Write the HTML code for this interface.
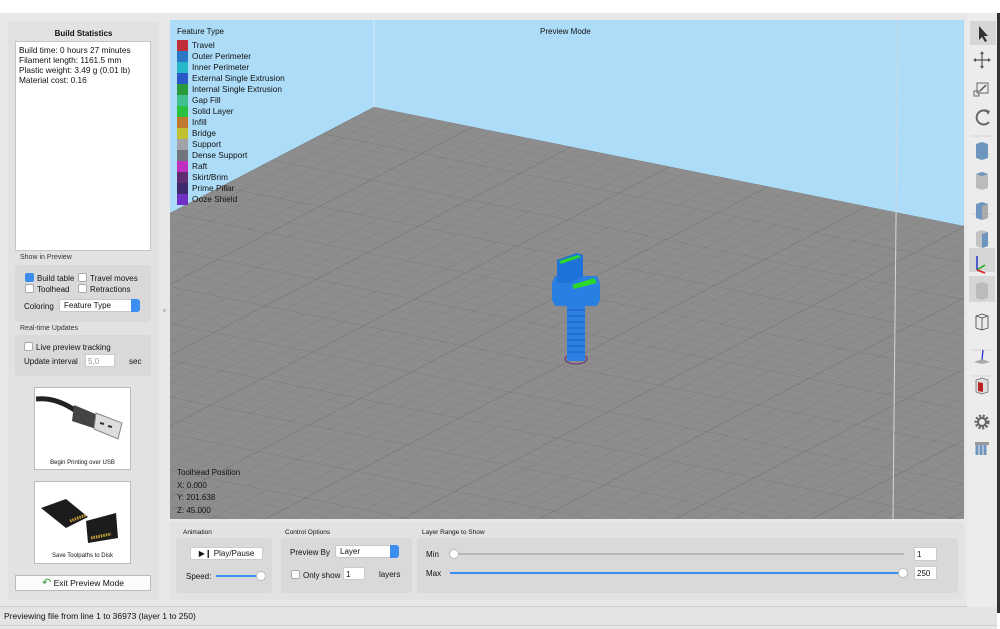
<!DOCTYPE html>
<html><head><meta charset="utf-8"><style>
*{box-sizing:border-box;margin:0;padding:0}
body{width:1000px;height:629px;background:#fff;font-family:"Liberation Sans",sans-serif;font-size:8px;color:#111;position:relative;overflow:hidden}
.abs{position:absolute}
.win{left:0;top:13px;width:997px;height:616px;background:#e8e8e8}
.panel{background:#e2e2e2;border-radius:3px}
.box{background:#d9d9d9;border-radius:3px}
.cb{display:inline-block;width:9px;height:9px;border:1px solid #aaa;background:#fff;border-radius:2px;vertical-align:-1px;margin-right:3px}
.cb.on{background:#3b8df0;border-color:#3b8df0}
.sel{background:#fff;border:1px solid #c8c8c8;border-radius:3px;height:13px;line-height:11px;padding-left:4px}
.sel i{position:absolute;right:-1px;top:-1px;width:9px;height:13px;background:#3b8df0;border-radius:0 3px 3px 0}
.leg div{height:11px;line-height:11px;white-space:nowrap;font-size:8.3px}
.leg span{display:inline-block;width:11px;height:11px;vertical-align:top;margin-right:4px}
.tb{left:970px;width:26px;height:24px}
</style></head><body>
<div class="abs win"></div>
<div class="abs panel" style="left:8px;top:21px;width:151px;height:579px"></div>
<div class="abs" style="left:8px;top:29px;width:151px;text-align:center;font-weight:bold;font-size:8px">Build Statistics</div>
<div class="abs" style="left:15px;top:41px;width:136px;height:210px;background:#fff;border:1px solid #c6c6c6;padding:3px 3px;line-height:10px;font-size:8.3px">Build time: 0 hours 27 minutes<br>Filament length: 1161.5 mm<br>Plastic weight: 3.49 g (0.01 lb)<br>Material cost: 0.16</div>
<div class="abs" style="left:20px;top:254px;font-size:7px;color:#333">Show in Preview</div>
<div class="abs box" style="left:15px;top:265px;width:136px;height:57px"></div>
<div class="abs" style="left:25px;top:273px"><span class="cb on"></span>Build table</div>
<div class="abs" style="left:78px;top:273px"><span class="cb"></span>Travel moves</div>
<div class="abs" style="left:25px;top:284px"><span class="cb"></span>Toolhead</div>
<div class="abs" style="left:78px;top:284px"><span class="cb"></span>Retractions</div>
<div class="abs" style="left:24px;top:302px">Coloring</div>
<div class="abs sel" style="left:59px;top:299px;width:81px">Feature Type<i></i></div>
<div class="abs" style="left:20px;top:325px;font-size:7px;color:#333">Real-time Updates</div>
<div class="abs box" style="left:15px;top:335px;width:136px;height:41px"></div>
<div class="abs" style="left:24px;top:342px"><span class="cb"></span>Live preview tracking</div>
<div class="abs" style="left:24px;top:357px">Update interval</div>
<div class="abs" style="left:85px;top:354px;width:30px;height:13px;background:#fff;border:1px solid #ccc;color:#999;padding:2px 2px">5,0</div>
<div class="abs" style="left:129px;top:357px">sec</div>
<div class="abs" style="left:34px;top:387px;width:97px;height:83px;background:#fff;border:1px solid #bbb"></div>
<svg class="abs" style="left:36px;top:389px" width="93" height="66"><path d="M0 10 Q20 8 40 22" stroke="#222" stroke-width="5" fill="none"/><path d="M38 16 L62 26 L60 40 L36 32Z" fill="#444"/><path d="M60 24 L86 34 L82 50 L58 40Z" fill="#ddd" stroke="#888"/><path d="M64 34l4 1M72 37l4 1" stroke="#333" stroke-width="2"/></svg>
<div class="abs" style="left:34px;top:460px;width:97px;text-align:center;font-size:6px">Begin Printing over USB</div>
<div class="abs" style="left:34px;top:481px;width:97px;height:83px;background:#fff;border:1px solid #bbb"></div>
<svg class="abs" style="left:36px;top:483px" width="93" height="66"><path d="M5 25 L30 16 L52 34 L30 45Z" fill="#1c1c1c"/><path d="M34 38l16-6" stroke="#c9a23a" stroke-width="3" stroke-dasharray="1.5 1"/><path d="M50 38 L80 30 L82 55 L52 60Z" fill="#1c1c1c"/><path d="M55 55l20-4" stroke="#c9a23a" stroke-width="3" stroke-dasharray="1.5 1"/></svg>
<div class="abs" style="left:34px;top:553px;width:97px;text-align:center;font-size:6px">Save Toolpaths to Disk</div>
<div class="abs" style="left:15px;top:575px;width:136px;height:16px;background:#fbfbfb;border:1px solid #bbb;text-align:center;line-height:14px;font-size:8.5px"><span style="color:#3a9a3a;font-size:11px">&#x21B6;</span> Exit Preview Mode</div>
<div class="abs" style="left:163px;top:309px;width:3px;height:3px;border-radius:50%;background:#bbb"></div>
<svg class="abs" style="left:170px;top:20px" width="794" height="499" viewBox="170 20 794 499">
<defs><pattern id="g" patternUnits="userSpaceOnUse" width="1" height="1" patternTransform="matrix(19.7,3.97,-10.2,5.3,374,107)"><rect width="1" height="1" fill="#8d8d8d"/><path d="M0 0H1M0 0V1" stroke="#7d7d7d" stroke-width="0.07"/></pattern>
<pattern id="G" patternUnits="userSpaceOnUse" width="5" height="5" patternTransform="matrix(19.7,3.97,-10.2,5.3,374,107)"><path d="M0 0H5M0 0V5" stroke="#6e6e6e" stroke-width="0.06"/></pattern></defs>
<rect x="170" y="20" width="794" height="499" fill="#acdcf8"/>
<line x1="374" y1="20" x2="374" y2="107" stroke="#d8eaf5" stroke-width="1"/>
<polygon points="374,107 964,226 964,519 170,519 170,213" fill="url(#g)"/>
<polygon points="374,107 964,226 964,519 170,519 170,213" fill="url(#G)"/>
<line x1="898" y1="20" x2="893" y2="519" stroke="#cfd8de" stroke-width="1"/>
<ellipse cx="576" cy="359" rx="11" ry="5" fill="none" stroke="#702070" stroke-width="1"/>
<rect x="567" y="305" width="18" height="56" fill="#2a7fe0"/>
<path d="M567 310h18M567 316h18M567 322h18M567 328h18M567 334h18M567 340h18M567 346h18M567 352h18" stroke="#1a5fbf" stroke-width="1"/>
<path d="M552 283 L555 276 L597 276 L600 283 L600 300 L597 306 L555 306 L552 300Z" fill="#2a80e2"/>
<path d="M557 260 L577 253 L583 255 L583 276 L570 283 L557 283Z" fill="#1e72d8"/>
<path d="M559 261 L578 255 L581 257 L561 264Z" fill="#2bd82b"/>
<path d="M572 285 L594 278 L597 283 L574 289Z" fill="#2bd82b"/>
</svg>
<div class="abs" style="left:540px;top:27px;font-size:8px">Preview Mode</div>
<div class="abs" style="left:177px;top:27px">Feature Type</div>
<div class="abs leg" style="left:177px;top:40px">
<div><span style="background:#c0303a"></span>Travel</div><div><span style="background:#2a78c8"></span>Outer Perimeter</div><div><span style="background:#26b8c8"></span>Inner Perimeter</div><div><span style="background:#2a58c8"></span>External Single Extrusion</div><div><span style="background:#2a9a3a"></span>Internal Single Extrusion</div><div><span style="background:#40c090"></span>Gap Fill</div><div><span style="background:#2ac040"></span>Solid Layer</div><div><span style="background:#c07a30"></span>Infill</div><div><span style="background:#c0c030"></span>Bridge</div><div><span style="background:#a0a4a8"></span>Support</div><div><span style="background:#70767c"></span>Dense Support</div><div><span style="background:#c030c0"></span>Raft</div><div><span style="background:#602c70"></span>Skirt/Brim</div><div><span style="background:#40286c"></span>Prime Pillar</div><div><span style="background:#7030c8"></span>Ooze Shield</div></div>
<div class="abs" style="left:177px;top:467px;line-height:12.7px">Toolhead Position<br>X: 0.000<br>Y: 201.638<br>Z: 45.000</div>
<div class="abs panel" style="left:170px;top:522px;width:794px;height:78px"></div>
<div class="abs" style="left:183px;top:529px;font-size:6.5px">Animation</div>
<div class="abs box" style="left:176px;top:538px;width:96px;height:55px"></div>
<div class="abs" style="left:190px;top:547px;width:73px;height:13px;background:#fff;border:1px solid #ccc;border-radius:2px;text-align:center;line-height:11px">&#x25B6;&#x2759; Play/Pause</div>
<div class="abs" style="left:186px;top:572px">Speed:</div>
<div class="abs" style="left:216px;top:575px;width:46px;height:2px;background:#3b8df0"></div>
<div class="abs" style="left:256px;top:571px;width:10px;height:10px;border-radius:50%;background:#fff;border:1px solid #bbb"></div>
<div class="abs" style="left:285px;top:529px;font-size:6.5px">Control Options</div>
<div class="abs box" style="left:281px;top:538px;width:131px;height:55px"></div>
<div class="abs" style="left:290px;top:548px">Preview By</div>
<div class="abs sel" style="left:335px;top:545px;width:64px">Layer<i></i></div>
<div class="abs" style="left:291px;top:570px"><span class="cb"></span>Only show</div>
<div class="abs" style="left:343px;top:567px;width:22px;height:13px;background:#fff;border:1px solid #ccc;padding:2px">1</div>
<div class="abs" style="left:379px;top:570px">layers</div>
<div class="abs" style="left:422px;top:529px;font-size:6.5px">Layer Range to Show</div>
<div class="abs box" style="left:417px;top:538px;width:541px;height:55px"></div>
<div class="abs" style="left:426px;top:550px">Min</div>
<div class="abs" style="left:454px;top:553px;width:450px;height:2px;background:#b8b8b8"></div>
<div class="abs" style="left:449px;top:549px;width:10px;height:10px;border-radius:50%;background:#fff;border:1px solid #bbb"></div>
<div class="abs" style="left:914px;top:547px;width:23px;height:14px;background:#fff;border:1px solid #ccc;padding:2px">1</div>
<div class="abs" style="left:426px;top:569px">Max</div>
<div class="abs" style="left:450px;top:572px;width:455px;height:2px;background:#3b8df0"></div>
<div class="abs" style="left:898px;top:568px;width:10px;height:10px;border-radius:50%;background:#fff;border:1px solid #bbb"></div>
<div class="abs" style="left:914px;top:566px;width:23px;height:14px;background:#fff;border:1px solid #ccc;padding:2px">250</div>
<div class="abs" style="left:0;top:606px;width:997px;height:20px;background:#e4e4e4;border-top:1px solid #ccc;border-bottom:1px solid #ccc;padding:4px 4px;font-size:8.5px">Previewing file from line 1 to 36973 (layer 1 to 250)</div>
<div class="abs" style="left:967px;top:13px;width:30px;height:594px;background:#ececec"></div>
<div class="abs" style="left:997px;top:13px;width:3px;height:600px;background:#333"></div>
<div class="abs tb" style="top:21px;background:#d6d6d6"></div>
<svg class="abs" style="left:968px;top:20px" width="28" height="440">
<path d="M11 6 L11 20 L14 17 L17 22 L19 21 L16 16 L20 16Z" fill="#333"/>
<path d="M14 33v14M7 40h14" stroke="#555" stroke-width="1.2"/><path d="M14 31l-2 3h4zM14 49l-2-3h4zM5 40l3-2v4zM23 40l-3-2v4z" fill="#555"/>
<rect x="9" y="63" width="11" height="10" fill="none" stroke="#666"/><rect x="6" y="71" width="5" height="5" fill="none" stroke="#666"/><path d="M12 71l6-6" stroke="#555" stroke-width="1.5"/>
<path d="M20 92 A7 7 0 1 0 21 102" fill="none" stroke="#666" stroke-width="2"/><path d="M17 89l5 2-2 4z" fill="#666"/>
<path d="M4 116h20M4 194h20M4 330h20M4 356h20" stroke="#bbb" stroke-dasharray="1 1"/>
<g><path d="M8 124l6-2 6 2v14l-6 2-6-2z" fill="#6d95bd"/><path d="M8 154l6-2 6 2v14l-6 2-6-2z" fill="#bbb"/><path d="M8 154l6-2 6 2-6 2z" fill="#6d95bd"/><path d="M8 184l6-2 6 2v14l-6 2-6-2z" fill="#6d95bd"/><path d="M14 186l6-2v14l-6 2z" fill="#aaa"/><path d="M8 212l6-2 6 2v14l-6 2-6-2z" fill="#c3c3c3"/><path d="M14 214l6-2v14l-6 2z" fill="#6d95bd"/></g>
<rect x="1" y="228" width="26" height="24" fill="#d6d6d6"/>
<path d="M9 250V236" stroke="#23c" stroke-width="1.5"/><path d="M9 250l8-5" stroke="#2a2" stroke-width="1.5"/><path d="M9 250l8 3" stroke="#d22" stroke-width="1.5"/>
<rect x="1" y="256" width="26" height="26" fill="#d6d6d6"/><path d="M8 264l6-2 6 2v14l-6 2-6-2z" fill="#bbb"/>
<path d="M8 296l6-2 6 2v12l-6 2-6-2zM8 296l6 2 6-2M14 298v12" fill="none" stroke="#444" stroke-width="0.8"/>
<path d="M14 340l1-10" stroke="#23c" stroke-width="1.3"/><path d="M6 342l8-3 8 3-8 2z" fill="#aaa"/>
<path d="M8 360l6-2 6 2v12l-6 2-6-2z" fill="#ddd" stroke="#666" stroke-width="0.7"/><path d="M10 362l5 1v9l-5-1z" fill="#b22"/>
<circle cx="14" cy="402" r="6" fill="none" stroke="#666" stroke-width="3" stroke-dasharray="2 1.6"/><circle cx="14" cy="402" r="4" fill="none" stroke="#666" stroke-width="2"/>
<path d="M7 422h14v3h-14z" fill="#999"/><path d="M9 425v10M13 425v10M17 425v10" stroke="#6d95bd" stroke-width="3"/>
</svg>
</body></html>
